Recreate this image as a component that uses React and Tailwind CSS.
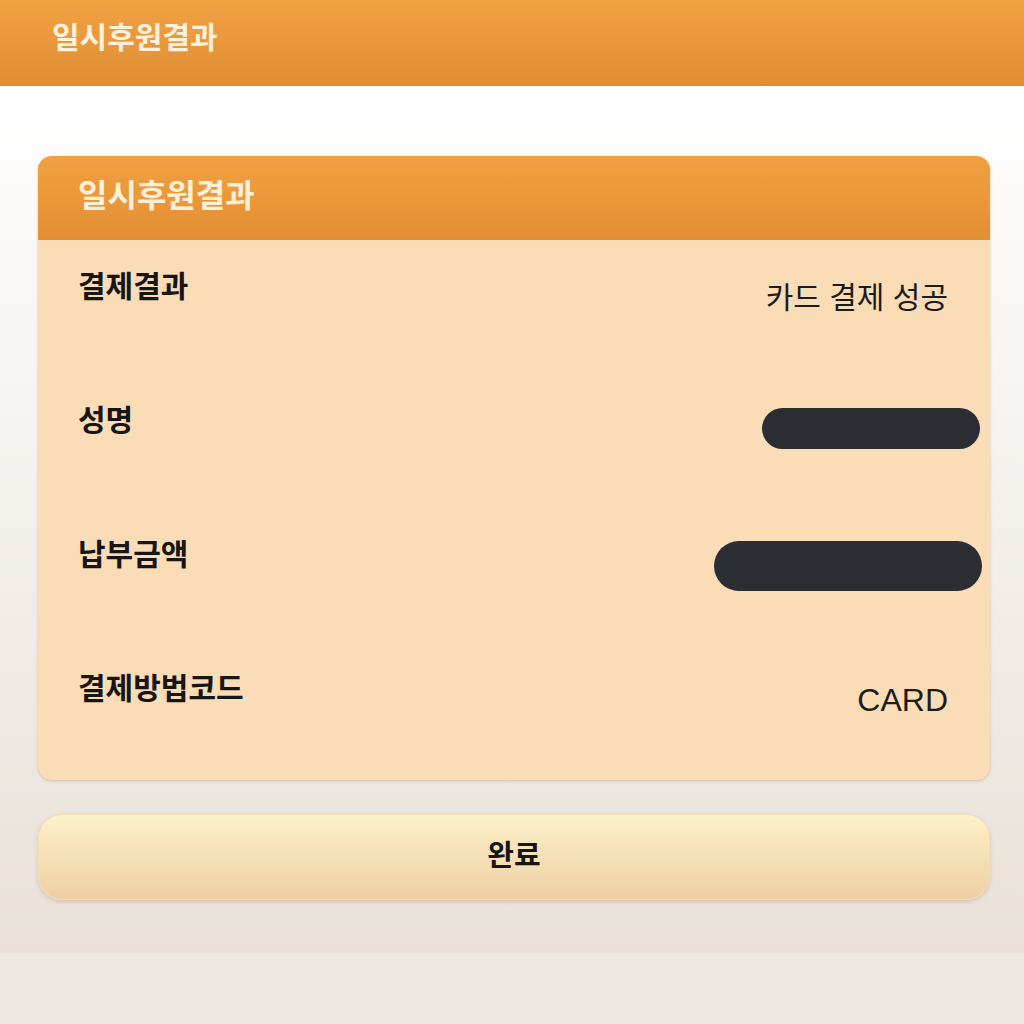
const font = { fontFamily: '"Liberation Sans", "Noto Sans CJK KR", sans-serif' }

const Row = ({ label, children }) => {
  return (
    <div className="flex h-[134px] justify-between pl-[40px] pr-[42px]">
      {/* label */}
      <div className="pt-[30px] text-[30px] font-bold leading-[34px] text-[#161616]">{label}</div>
      {/* value */}
      <div className="pt-[38px] leading-[40px] text-[#1c1c1c]">{children}</div>
    </div>
  )
}

const App = () => {
  return (
    <div className="flex h-[1024px] w-[1024px] flex-col overflow-hidden" style={font}>
      {/* top bar */}
      <div className="flex h-[86px] shrink-0 items-center bg-gradient-to-b from-[#f1a243] to-[#e08d32] pl-[52px] shadow-[0_1px_2px_rgba(160,90,20,0.35)]">
        <span className="pb-[12px] text-[30px] font-bold text-[#fdf1dc]">일시후원결과</span>
      </div>

      {/* body */}
      <div className="flex h-[867px] shrink-0 flex-col bg-gradient-to-b from-[#ffffff] to-[#e9e1d9] pl-[38px] pr-[34px] pt-[70px]">
        {/* card */}
        <div className="overflow-hidden rounded-[14px] bg-[#fadcb7] shadow-[0_1px_3px_rgba(150,110,70,0.35)]">
          <div className="flex h-[84px] items-center bg-gradient-to-b from-[#f1a141] to-[#e28f33] pl-[40px]">
            <span className="pb-[4px] text-[32px] font-bold text-[#fdf0da]">일시후원결과</span>
          </div>
          <div className="pb-[4px]">
            <Row label="결제결과">
              <span className="text-[30px]">카드 결제 성공</span>
            </Row>
            <Row label="성명">
              <div className="mr-[-32px] mt-[-4px] h-[41px] w-[218px] rounded-full bg-[#2a2d32]" />
            </Row>
            <Row label="납부금액">
              <div className="mr-[-34px] mt-[-5px] h-[50px] w-[268px] rounded-full bg-[#2a2d32]" />
            </Row>
            <Row label="결제방법코드">
              <span className="text-[32px]">CARD</span>
            </Row>
          </div>
        </div>

        {/* button */}
        <button className="mt-[34px] flex h-[86px] w-full items-center justify-center rounded-[24px] border border-[#f3dcb8] bg-gradient-to-b from-[#fdf1c9] to-[#efcfa3] text-[29px] font-bold text-[#161616] shadow-[0_2px_4px_rgba(170,120,70,0.3)]">
          완료
        </button>
      </div>

      {/* footer */}
      <div className="flex-1 bg-[#ede8e2]" />
    </div>
  )
}

export default App
